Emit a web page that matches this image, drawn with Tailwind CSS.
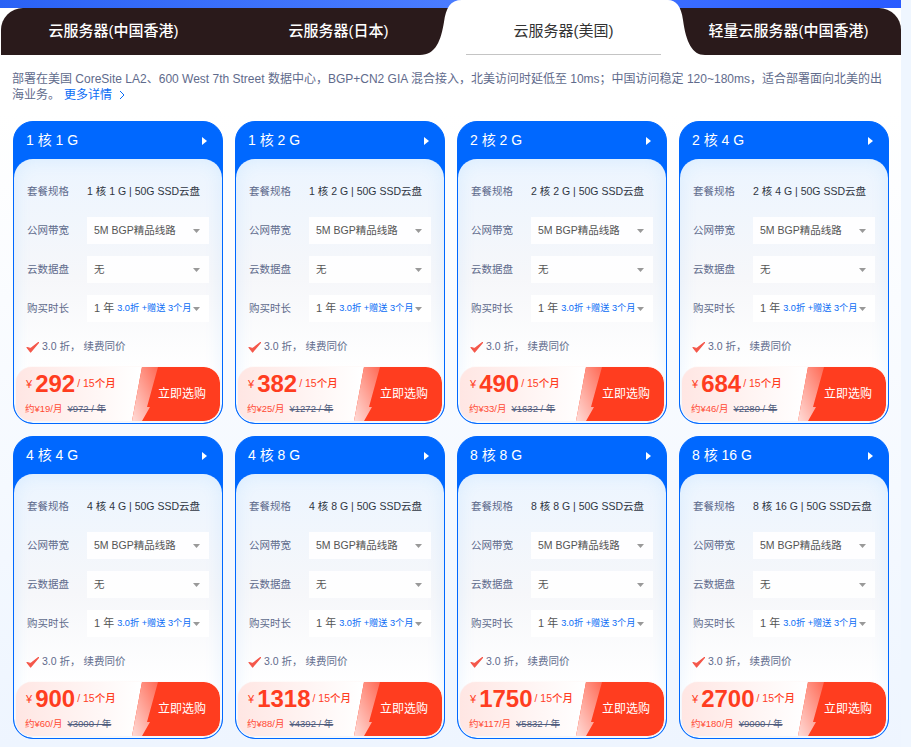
<!DOCTYPE html>
<html lang="zh-CN">
<head>
<meta charset="utf-8">
<title>云服务器(美国)</title>
<script src="https://cdn.jsdelivr.net/npm/@tailwindcss/browser@4"></script>
</head>
<body class="m-0 h-[747px] overflow-hidden bg-[#eff6ff] font-['Liberation_Sans','Noto_Sans_CJK_SC',sans-serif]">
<main class="relative h-[747px] w-[901px] bg-gradient-to-b from-white from-[15%] to-[#eef5ff]">
  <div class="h-2 w-full bg-gradient-to-r from-[#2a62f5] via-[#4a7cff] to-[#2a5bff]"></div>
  <nav class="relative ml-px flex h-[47px] w-[900px] rounded-t-[22px] bg-[#2a1a1b] text-[15px] font-medium text-white">
    <a class="flex w-[225px] items-center justify-center pb-px">云服务器(中国香港)</a>
    <a class="flex w-[225px] items-center justify-center pb-px">云服务器(日本)</a>
    <a class="relative z-10 flex w-[225px] items-center justify-center pb-px font-normal text-[#333]">云服务器(美国)</a>
    <a class="flex w-[225px] items-center justify-center pb-px">轻量云服务器(中国香港)</a>
    <svg class="absolute left-[399px] top-[-8px]" width="310" height="55" viewBox="0 0 310 55"><path fill="#fff" d="M20 55C36 55 41 40 44 22C46 8 50 0 62 0L268 0C276 0 281 6 283 20C286 42 292 55 305 55Z"/></svg>
    <div class="absolute bottom-0 left-[465px] z-10 h-px w-[195px] bg-[#c4c4c4]"></div>
  </nav>
  <p class="ml-3 mt-4 mb-[18px] h-8 w-[880px] text-[12px] leading-4 text-[#5f6b8c]">部署在美国 CoreSite LA2、600 West 7th Street 数据中心，BGP+CN2 GIA 混合接入，北美访问时延低至 10ms；中国访问稳定 120~180ms，适合部署面向北美的出海业务。<a class="ml-1 inline-flex items-center gap-[7px] text-[#0a6cf5]">更多详情<svg width="6" height="10" viewBox="0 0 6 10"><path d="M1 1l4 4-4 4" fill="none" stroke="#0a6cf5"/></svg></a></p>
  <section id="grid" class="ml-[13px] grid w-[876px] grid-cols-4 gap-3"></section>
</main>
<script>
const plans=[["1 核 1 G","292","19","972"],["1 核 2 G","382","25","1272"],["2 核 2 G","490","33","1632"],["2 核 4 G","684","46","2280"],["4 核 4 G","900","60","3000"],["4 核 8 G","1318","88","4392"],["8 核 8 G","1750","117","5832"],["8 核 16 G","2700","180","9000"]];
const arrow='<svg class="absolute right-[9px] top-[12px]" width="7" height="4" viewBox="0 0 7 4"><path d="M0 0h7L3.5 4z" fill="#999"/></svg>';
document.getElementById("grid").innerHTML=plans.map(([name,price,month,orig])=>`
<article class="flex h-[303px] w-[210px] flex-col overflow-hidden rounded-[20px] border border-[#0068ff] bg-[#0068ff]">
  <header class="flex h-[37px] shrink-0 items-center justify-between pl-3 pr-[15px] text-[14px] text-white"><span>${name}</span><svg width="5" height="8" viewBox="0 0 5 8"><path d="M0 0l5 4-5 4z" fill="#fff"/></svg></header>
  <div class="flex-1 rounded-[19px] bg-gradient-to-b from-[#ecf5ff] via-[#f6f7fa] via-[45%] to-white to-[80%] pt-[19px] shadow-[inset_0_0_18px_rgba(40,160,255,0.1)]">
    <div class="mb-3 flex h-[27px] items-center pl-3 text-[10.5px] text-[#2f3542]"><span class="w-[61px] pl-px text-[#5f6b8c]">套餐规格</span><span>${name} | 50G SSD云盘</span></div>
    <div class="mb-3 flex h-[27px] items-center pl-3 text-[10.5px]"><span class="w-[61px] pl-px text-[#5f6b8c]">公网带宽</span><div class="relative flex h-[27px] w-[122px] items-center bg-white/90 pl-[7px] text-[#555]">5M BGP精品线路${arrow}</div></div>
    <div class="mb-3 flex h-[27px] items-center pl-3 text-[10.5px]"><span class="w-[61px] pl-px text-[#5f6b8c]">云数据盘</span><div class="relative flex h-[27px] w-[122px] items-center bg-white/90 pl-[7px] text-[#555]">无${arrow}</div></div>
    <div class="mb-3 flex h-[27px] items-center pl-3 text-[10.5px]"><span class="w-[61px] pl-px text-[#5f6b8c]">购买时长</span><div class="relative flex h-[27px] w-[122px] items-center whitespace-nowrap bg-white pl-[7px] text-[#555]"><span class="mr-[3px] text-[11px]">1 年</span><span class="text-[9.2px] text-[#0a6cf5]">3.0折 +赠送 3个月</span>${arrow}</div></div>
    <div class="flex h-6 items-center pl-3 pt-px text-[10.5px] text-[#5f6b8c]"><svg class="mr-[3px]" width="13" height="12" viewBox="0 0 13 12"><path d="M1 6.5l3.5 4.5L12.5 1.5 4.8 7.5z" fill="#f4574a" stroke="#f4574a" stroke-width="1.2" stroke-linejoin="round"/></svg>3.0 折， 续费同价</div>
    <div class="mx-[2px] mt-[9px] flex h-[54px] overflow-hidden rounded-[16px] bg-gradient-to-r from-[#ffe6e3] to-white to-[60%] shadow-[0_0_1px_#ffd0c8]">
      <div class="min-w-0 flex-1 pl-[9px] pt-[2px]">
        <div class="flex h-[30px] items-center whitespace-nowrap pl-px text-[#ff3d1f]"><span class="mr-[3px] text-[11px] font-medium">¥</span><span class="text-[24px] font-bold leading-none">${price}</span><span class="ml-[2px] text-[10.5px] font-medium">/ 15个月</span></div>
        <div class="mt-[3px] flex items-center gap-[5px] whitespace-nowrap text-[9.5px]"><span class="text-[#ff4a33]">约¥${month}/月</span><span class="text-[#4f5b7c] line-through">¥${orig} / 年</span></div>
      </div>
      <button class="relative flex h-[54px] w-[88px] items-center justify-end bg-transparent pr-[14px] text-[12px] text-white">
        <svg class="absolute left-0 top-0" width="88" height="54" viewBox="0 0 88 54"><defs><linearGradient id="s" x1="1" y1="0" x2="0" y2="1"><stop offset="0" stop-color="#ff6a55"/><stop offset="1" stop-color="#ffdcd8"/></linearGradient></defs><path d="M10 0H72a16 16 0 0 1 16 16V38a16 16 0 0 1-16 16H0z" fill="#ff3d1f"/><path d="M10 0H26L15 40H18L10 54H0z" fill="url(#s)"/></svg>
        <span class="relative">立即选购</span>
      </button>
    </div>
  </div>
</article>`).join("");
</script>
</body>
</html>
